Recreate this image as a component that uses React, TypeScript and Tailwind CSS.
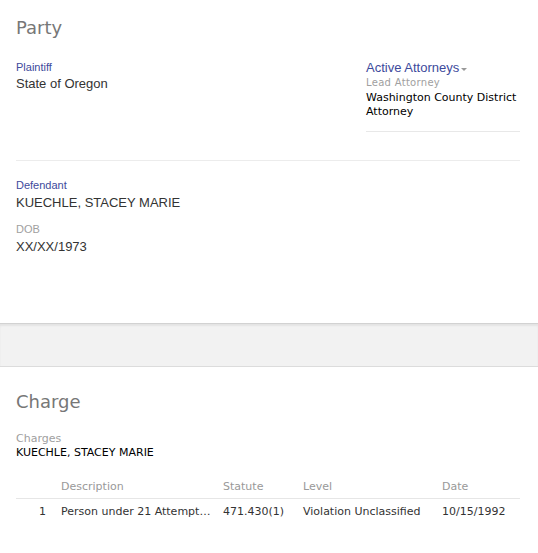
import React from 'react'

const verdana = { fontFamily: '"DejaVu Sans", Verdana, sans-serif' }
const arial = { fontFamily: '"Liberation Sans", Arial, sans-serif' }

function Label({ children, gray }: { children: React.ReactNode; gray?: boolean }) {
  return (
    <div
      className={`text-[11px] leading-[14px] ${gray ? 'text-[#a0a0a0]' : 'text-[#3d4a9c]'}`}
      style={arial}
    >
      {children}
    </div>
  )
}

function PartyCard() {
  return (
    <section className="bg-white px-4 pt-[16px] h-[323px]">
      <h2 className="text-[18px] leading-6 text-[#777777]" style={verdana}>
        Party
      </h2>

      <div className="flex mt-[20px]">
        <div className="flex-1">
          <Label>Plaintiff</Label>
          <div className="text-[13px] leading-[18px] text-[#333333] mt-[1px]" style={arial}>
            State of Oregon
          </div>
        </div>
        <div className="w-[154px] mr-[2px] -mt-[1px]">
          <div className="flex items-center text-[13px] leading-[18px] text-[#3d4a9c]" style={arial}>
            Active Attorneys
            <svg width="8" height="5" viewBox="0 0 8 5" className="ml-[1px] mt-[2px]">
              <path d="M1 1h6L4 4z" fill="#999999" />
            </svg>
          </div>
          <div className="text-[10px] leading-[13px] text-[#a0a0a0] tracking-[0.3px] -mt-[1px]" style={verdana}>
            Lead Attorney
          </div>
          <div className="text-[11px] leading-[14px] text-black mt-[2px]" style={verdana}>
            Washington County District Attorney
          </div>
          <div className="border-b border-[#e8e8e8] mt-[12px]" />
        </div>
      </div>

      <div className="border-b border-[#ececec] mt-[28px] mr-[2px]" />

      <div className="mt-[17px]">
        <Label>Defendant</Label>
        <div className="text-[13px] leading-[18px] text-[#333333] mt-[2px]" style={arial}>
          KUECHLE, STACEY MARIE
        </div>
        <div className="mt-[10px]">
          <Label gray>DOB</Label>
        </div>
        <div className="text-[13px] leading-[18px] text-[#333333] mt-[2px]" style={arial}>
          XX/XX/1973
        </div>
      </div>
    </section>
  )
}

function ChargeCard() {
  return (
    <section className="bg-white px-4 pt-[23px] pb-8">
      <h2 className="text-[18px] leading-6 text-[#777777]" style={verdana}>
        Charge
      </h2>
      <div className="mt-[18px] text-[11px] leading-[14px] text-[#a0a0a0]" style={verdana}>
        Charges
      </div>
      <div className="text-[11px] leading-[14px] text-black" style={verdana}>
        KUECHLE, STACEY MARIE
      </div>

      <table className="mt-[18px] w-[504px] table-fixed border-collapse text-[11px]" style={verdana}>
        <colgroup>
          <col className="w-[45px]" />
          <col className="w-[162px]" />
          <col className="w-[80px]" />
          <col className="w-[139px]" />
          <col />
        </colgroup>
        <thead>
          <tr className="text-[#999999] border-b border-[#e6e6e6]">
            <th className="font-normal text-left h-[20px] pb-[2px]"></th>
            <th className="font-normal text-left pb-[2px]">Description</th>
            <th className="font-normal text-left pb-[2px]">Statute</th>
            <th className="font-normal text-left pb-[2px]">Level</th>
            <th className="font-normal text-left pb-[2px]">Date</th>
          </tr>
        </thead>
        <tbody className="text-[#333333]">
          <tr>
            <td className="text-right pr-[15px] h-[27px]">1</td>
            <td className="whitespace-nowrap" title="Person under 21 Attempting to Purchase Liquor">
              Person under 21 Attempt…
            </td>
            <td className="whitespace-nowrap">471.430(1)</td>
            <td className="whitespace-nowrap">Violation Unclassified</td>
            <td className="whitespace-nowrap">10/15/1992</td>
          </tr>
        </tbody>
      </table>
    </section>
  )
}

export default function App() {
  return (
    <div className="w-[538px] min-h-[553px] bg-white">
      <PartyCard />
      <div className="h-[44px] bg-[#f2f2f2] border-t border-[#d2d2d2] border-b border-b-[#dcdcdc] shadow-[inset_0_2px_2px_rgba(0,0,0,0.06)]" />
      <ChargeCard />
    </div>
  )
}
